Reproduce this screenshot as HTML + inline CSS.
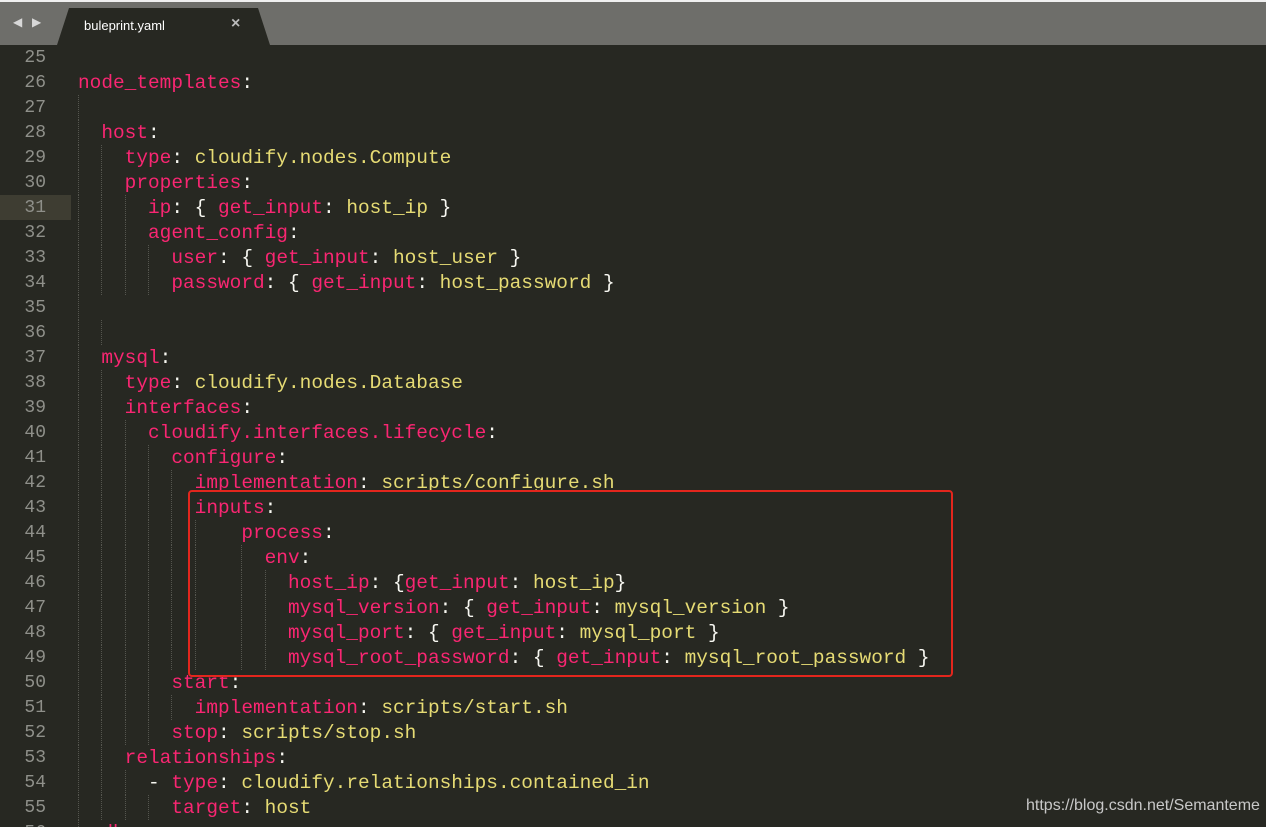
<!DOCTYPE html>
<html><head><meta charset="utf-8"><style>
html,body{margin:0;width:1266px;height:827px;overflow:hidden}
body{background:#272822;position:relative;font-family:"Liberation Mono",monospace}
.bar{position:absolute;left:0;top:0;width:1266px;height:45px;background:#6e6e6a;border-top:2px solid #f0f0f0;box-sizing:border-box}
.tab{position:absolute;left:57px;top:8px;width:213px;height:37px;background:#272822;clip-path:polygon(0 100%,12px 0,201px 0,213px 100%)}
.tab span{position:absolute;left:27px;top:10px;font:13px "Liberation Sans",sans-serif;color:#fff}
.tab b{position:absolute;left:174px;top:7px;font:bold 16px "Liberation Sans",sans-serif;color:#bbb}
.arr{position:absolute;top:15px;color:#d8d8d8;font-size:12px;font-family:"DejaVu Sans",sans-serif}
.ln{position:absolute;left:0;width:46px;text-align:right;font-size:18px;color:#8f908a;height:25px;line-height:27px}
.cl{position:absolute;left:78px;height:25px;line-height:27px;font-size:19.45px;white-space:pre;color:#f8f8f2}
.k{color:#f92672}.s{color:#e6db74}
.g{position:absolute;width:0;border-left:1px dotted #55564f}
.box{position:absolute;left:188px;top:490px;width:761px;height:183px;border:2.5px solid #e3261d;border-radius:4px}
.wm{position:absolute;left:1026px;top:797px;font:16px "Liberation Sans",sans-serif;color:#c8c8c8}
</style></head><body>
<div class="bar"></div>
<div class="arr" style="left:13px">◀</div><div class="arr" style="left:32px">▶</div>
<div class="tab"><span>buleprint.yaml</span><b>×</b></div>
<div style="position:absolute;left:0;top:195px;width:71px;height:25px;background:#3e3d32"></div>
<div id="c"></div>
<div class="box"></div>
<div class="wm">https://blog.csdn.net/Semanteme</div>
<script>
var L={
26:'<span class="k">node_templates</span>:',
27:'',
28:'  <span class="k">host</span>:',
29:'    <span class="k">type</span>: <span class="s">cloudify.nodes.Compute</span>',
30:'    <span class="k">properties</span>:',
31:'      <span class="k">ip</span>: { <span class="k">get_input</span>: <span class="s">host_ip</span> }',
32:'      <span class="k">agent_config</span>:',
33:'        <span class="k">user</span>: { <span class="k">get_input</span>: <span class="s">host_user</span> }',
34:'        <span class="k">password</span>: { <span class="k">get_input</span>: <span class="s">host_password</span> }',
35:'',36:'',
37:'  <span class="k">mysql</span>:',
38:'    <span class="k">type</span>: <span class="s">cloudify.nodes.Database</span>',
39:'    <span class="k">interfaces</span>:',
40:'      <span class="k">cloudify.interfaces.lifecycle</span>:',
41:'        <span class="k">configure</span>:',
42:'          <span class="k">implementation</span>: <span class="s">scripts/configure.sh</span>',
43:'          <span class="k">inputs</span>:',
44:'              <span class="k">process</span>:',
45:'                <span class="k">env</span>:',
46:'                  <span class="k">host_ip</span>: {<span class="k">get_input</span>: <span class="s">host_ip</span>}',
47:'                  <span class="k">mysql_version</span>: { <span class="k">get_input</span>: <span class="s">mysql_version</span> }',
48:'                  <span class="k">mysql_port</span>: { <span class="k">get_input</span>: <span class="s">mysql_port</span> }',
49:'                  <span class="k">mysql_root_password</span>: { <span class="k">get_input</span>: <span class="s">mysql_root_password</span> }',
50:'        <span class="k">start</span>:',
51:'          <span class="k">implementation</span>: <span class="s">scripts/start.sh</span>',
52:'        <span class="k">stop</span>: <span class="s">scripts/stop.sh</span>',
53:'    <span class="k">relationships</span>:',
54:'      - <span class="k">type</span>: <span class="s">cloudify.relationships.contained_in</span>',
55:'        <span class="k">target</span>: <span class="s">host</span>',
56:'  <span class="k">db_s</span>'
};
var G={27:2,35:2,36:4};
var h='';
for(var n=25;n<=56;n++){
 var t=45+(n-25)*25;
 h+='<div class="ln" style="top:'+t+'px">'+n+'</div>';
 var s=L[n]||'';
 h+='<div class="cl" style="top:'+t+'px">'+s+'</div>';
 var ind=G[n]!==undefined?G[n]:(s.match(/^ */)[0].length);
 if(n==25)ind=0;
 for(var c=0;c<ind;c+=2){
  var x=78+c*11.67;
  if(n>=44&&n<=49&&c==12)continue;
  h+='<div class="g" style="left:'+x+'px;top:'+t+'px;height:25px"></div>';
 }
}
document.getElementById('c').innerHTML=h;
</script>
</body></html>
